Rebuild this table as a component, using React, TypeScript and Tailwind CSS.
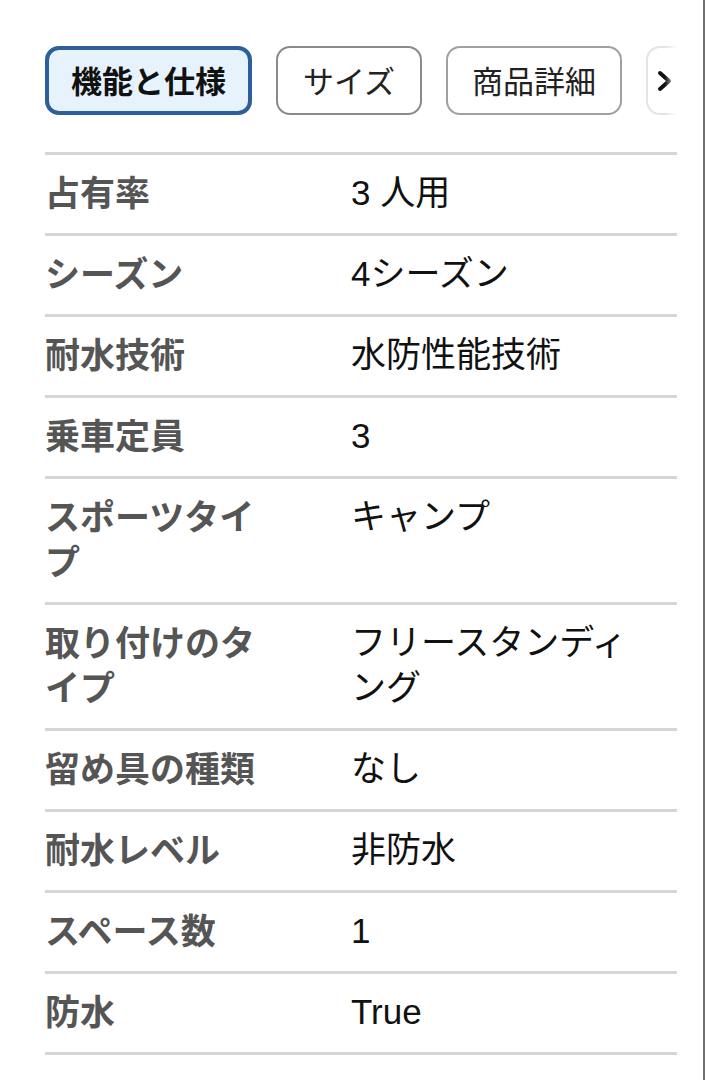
import React from "react";

const rows: [string, string][] = [
  ["占有率", "3 人用"],
  ["シーズン", "4シーズン"],
  ["耐水技術", "水防性能技術"],
  ["乗車定員", "3"],
  ["スポーツタイプ", "キャンプ"],
  ["取り付けのタイプ", "フリースタンディング"],
  ["留め具の種類", "なし"],
  ["耐水レベル", "非防水"],
  ["スペース数", "1"],
  ["防水", "True"],
];

const font = {
  fontFamily: '"Noto Sans CJK JP", "Noto Sans", "Liberation Sans", sans-serif',
};
const valueFont = {
  fontFamily: '"Liberation Sans", "Noto Sans CJK JP", sans-serif',
};

export default function App() {
  return (
    <div
      className="w-[705px] min-h-[1080px] bg-white border-r-2 border-[#707070]"
      style={font}
    >
      <div className="ml-[45px] w-[632px] pt-[46px]">
        <div className="relative flex gap-6 overflow-hidden">
          <button className="shrink-0 h-[69px] px-[22px] pb-[3px] rounded-[14px] border-4 border-[#2c5f9b] bg-[#e7f3fc] text-[31px] font-bold text-[#111] leading-none">
            機能と仕様
          </button>
          <button className="shrink-0 h-[69px] px-[25px] pb-[3px] rounded-[14px] border-2 border-[#8a8a8a] bg-white text-[31px] text-[#222] leading-none">
            サイズ
          </button>
          <button className="shrink-0 h-[69px] px-[24px] pb-[3px] rounded-[14px] border-2 border-[#a0a0a0] bg-white text-[31px] text-[#222] leading-none">
            商品詳細
          </button>
          <button className="shrink-0 h-[69px] w-[60px] pl-[8px] rounded-[14px] border-2 border-[#e4e4e4] bg-white flex items-center">
            <svg width="18" height="22" viewBox="0 0 18 22" fill="none">
              <path
                d="M4 3 L13 11 L4 19"
                stroke="#111"
                strokeWidth="4"
                strokeLinecap="round"
                strokeLinejoin="round"
              />
            </svg>
          </button>
          <div className="pointer-events-none absolute right-0 top-0 h-full w-[12px] bg-gradient-to-r from-transparent to-white" />
        </div>

        <div className="mt-[37px] border-b-[3px] border-[#d6d6d6]">
          {rows.map(([k, v]) => (
            <div
              key={k}
              className="grid grid-cols-[306px_1fr] border-t-[3px] border-[#d6d6d6] pt-[13px] pb-[18px] text-[35px] leading-[45px]"
            >
              <div className="pr-[80px] pb-[2px] font-bold text-[#555]">{k}</div>
              <div className="pr-[30px] pt-[2px] text-[#111]" style={valueFont}>
                {v}
              </div>
            </div>
          ))}
        </div>
      </div>
    </div>
  );
}
